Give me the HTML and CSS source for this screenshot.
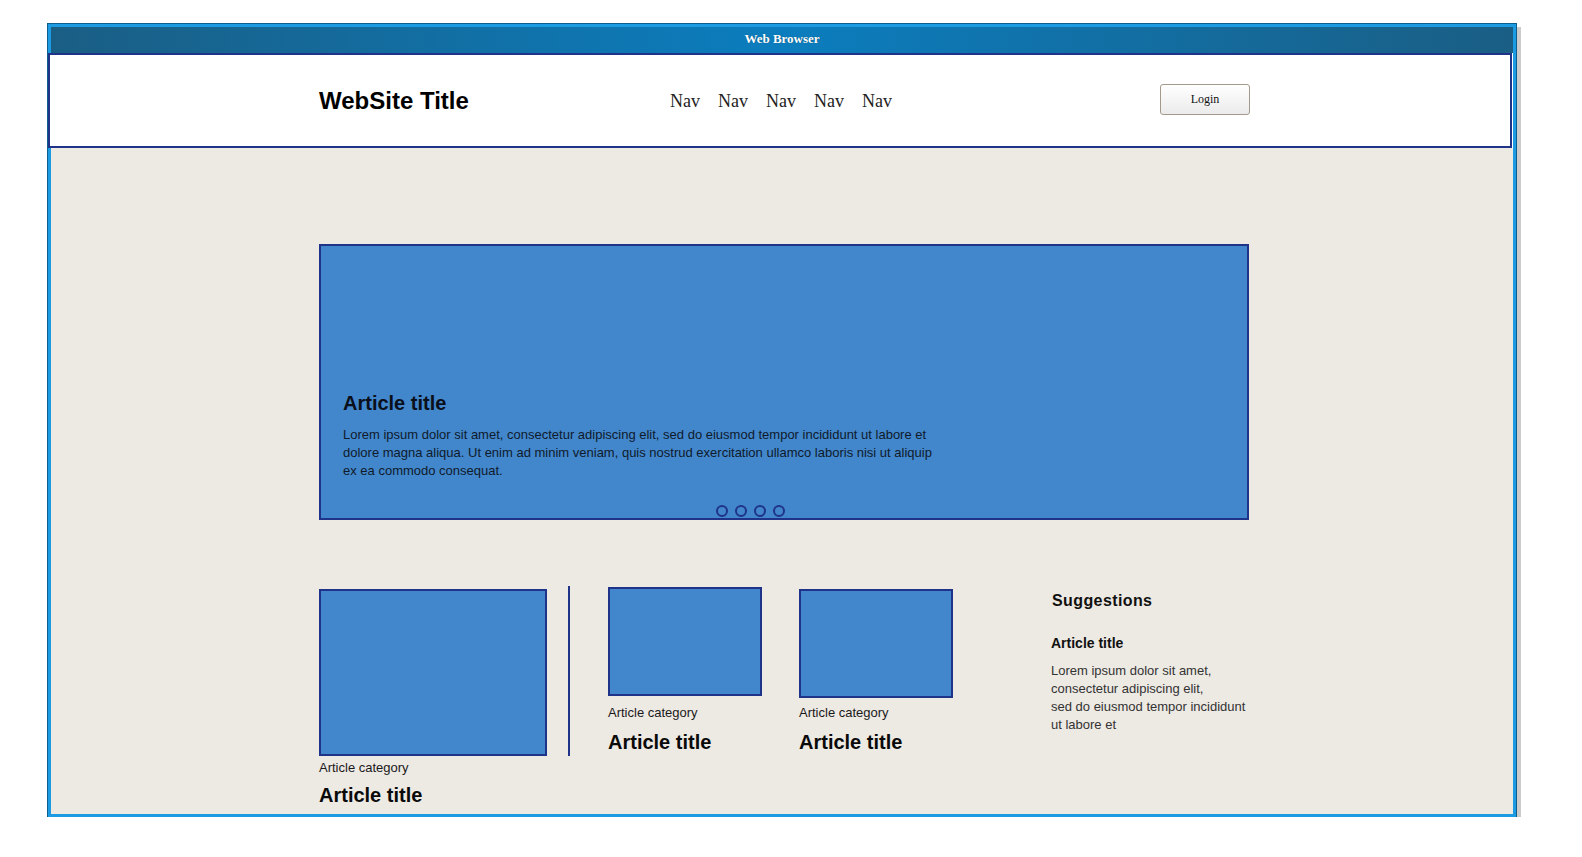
FILE: index.html
```html
<!DOCTYPE html>
<html lang="en">
<head>
<meta charset="UTF-8">
<meta name="viewport" content="width=device-width, initial-scale=1.0">
<title>Web Browser</title>
<link rel="stylesheet" href="styles.css">
</head>
<body>

<div class="window">
  <div class="titlebar">Web Browser</div>

  <div class="header">
    <div class="header-inner">
      <h1 class="site-title">WebSite Title</h1>
      <nav class="nav">
        <a href="#">Nav</a>
        <a href="#">Nav</a>
        <a href="#">Nav</a>
        <a href="#">Nav</a>
        <a href="#">Nav</a>
      </nav>
      <button type="button" class="login">Login</button>
    </div>
  </div>

  <div class="main">
    <div class="hero">
      <h2 class="hero-title">Article title</h2>
      <p class="hero-text">Lorem ipsum dolor sit amet, consectetur adipiscing elit, sed do eiusmod tempor incididunt ut labore et<br>
        dolore magna aliqua. Ut enim ad minim veniam, quis nostrud exercitation ullamco laboris nisi ut aliquip<br>
        ex ea commodo consequat.</p>
      <div class="dots">
        <span class="dot"></span>
        <span class="dot"></span>
        <span class="dot"></span>
        <span class="dot"></span>
      </div>
    </div>

    <div class="row">
      <div class="card card-lg">
        <div class="thumb"></div>
        <div class="category">Article category</div>
        <div class="card-title">Article title</div>
      </div>

      <div class="divider"></div>

      <div class="card card-sm card-2">
        <div class="thumb"></div>
        <div class="category">Article category</div>
        <div class="card-title">Article title</div>
      </div>

      <div class="card card-sm card-3">
        <div class="thumb"></div>
        <div class="category">Article category</div>
        <div class="card-title">Article title</div>
      </div>

      <div class="suggestions">
        <h3 class="sugg-heading">Suggestions</h3>
        <div class="sugg-title">Article title</div>
        <p class="sugg-text">Lorem ipsum dolor sit amet,<br>
          consectetur adipiscing elit,<br>
          sed do eiusmod tempor incididunt<br>
          ut labore et</p>
      </div>
    </div>
  </div>
</div>

</body>
</html>
```

FILE: styles.css
```css
body {
  margin: 0;
  padding: 0;
  background-color: #fff;
  font-family: "Liberation Sans", Arial, sans-serif;
}

.window {
  width: 1462px;
  margin: 24px 0 0 48px;
  border: 3px solid #1c9be2;
  outline: 1px solid #0d5d8e;
  box-shadow: 4px 4px 0 1px #cbcbcb;
}

.titlebar {
  height: 26px;
  line-height: 24px;
  text-align: center;
  font-family: "Liberation Serif", "Times New Roman", serif;
  font-size: 13px;
  font-weight: bold;
  color: #fff;
  text-shadow: 0 0 1px rgba(0, 0, 0, 0.4);
  background: linear-gradient(to right, #1a5e84, #0b7dbe 50%, #1a5e84);
}

.header {
  height: 91px;
  margin: 0 1px 0 -3px;
  background-color: #fff;
  border: 2px solid #1f3388;
}

.header-inner {
  height: 100%;
  width: 931px;
  margin-left: 269px;
  display: grid;
  grid-template-columns: 351px auto 1fr;
  align-items: center;
}

.site-title {
  margin: 0;
  font-size: 24px;
  font-weight: bold;
  color: #000;
  line-height: 28px;
}

.nav {
  display: flex;
  gap: 18px;
  padding-top: 2px;
}

.nav a {
  font-family: "Liberation Serif", "Times New Roman", serif;
  font-size: 18px;
  color: #222;
  text-decoration: none;
}

.login {
  justify-self: end;
  width: 90px;
  height: 31px;
  margin-top: -3px;
  padding: 0;
  font-family: "Liberation Serif", "Times New Roman", serif;
  font-size: 12px;
  color: #111;
  background: linear-gradient(to bottom, #ffffff, #ebebeb);
  border: 1px solid #a39a8c;
  border-radius: 3px;
}

.main {
  height: 666px;
  box-sizing: border-box;
  padding: 96px 0 0 268px;
  background-color: #ede9e3;
}

.hero {
  width: 930px;
  padding: 145px 0 1px 22px;
  box-sizing: border-box;
  background-color: #4287cc;
  border: 2px solid #1f3388;
}

.hero-title {
  margin: 0;
  font-size: 20px;
  line-height: 24px;
  font-weight: bold;
  color: #0a0f1a;
}

.hero-text {
  margin: 11px 0 0;
  font-size: 13px;
  line-height: 18px;
  color: #0f1a2b;
  white-space: nowrap;
}

.dots {
  display: flex;
  gap: 7px;
  margin: 25px 0 0 373px;
}

.dot {
  width: 12px;
  height: 12px;
  box-sizing: border-box;
  border: 2px solid #1f3388;
  border-radius: 50%;
}

.row {
  display: flex;
  align-items: flex-start;
  width: 930px;
  margin-top: 66px;
}

.thumb {
  box-sizing: border-box;
  background-color: #4287cc;
  border: 2px solid #1f3388;
}

.category {
  font-size: 13px;
  line-height: 16px;
  color: #1a1a1a;
}

.card-title {
  font-size: 20px;
  line-height: 24px;
  font-weight: bold;
  color: #0a0a0a;
}

.card-lg {
  margin-top: 3px;
}

.card-lg .thumb {
  width: 228px;
  height: 167px;
}

.card-lg .category {
  margin-top: 4px;
}

.card-lg .card-title {
  margin-top: 7px;
}

.divider {
  width: 2px;
  height: 170px;
  margin-left: 21px;
  background-color: #1f3388;
}

.card-sm .thumb {
  width: 154px;
  height: 109px;
}

.card-sm .card-title {
  margin-top: 9px;
}

.card-2 {
  margin-left: 38px;
  margin-top: 1px;
}

.card-2 .category {
  margin-top: 9px;
}

.card-3 {
  margin-left: 37px;
  margin-top: 3px;
}

.card-3 .category {
  margin-top: 7px;
}

.suggestions {
  margin-left: auto;
  width: 198px;
  margin-top: 5px;
}

.sugg-heading {
  margin: 0 0 0 1px;
  font-size: 16px;
  line-height: 20px;
  letter-spacing: 0.4px;
  color: #111;
}

.sugg-title {
  margin-top: 23px;
  font-size: 14px;
  line-height: 18px;
  font-weight: bold;
  color: #111;
}

.sugg-text {
  margin: 10px 0 0;
  font-size: 13px;
  line-height: 18px;
  color: #333;
}
```
